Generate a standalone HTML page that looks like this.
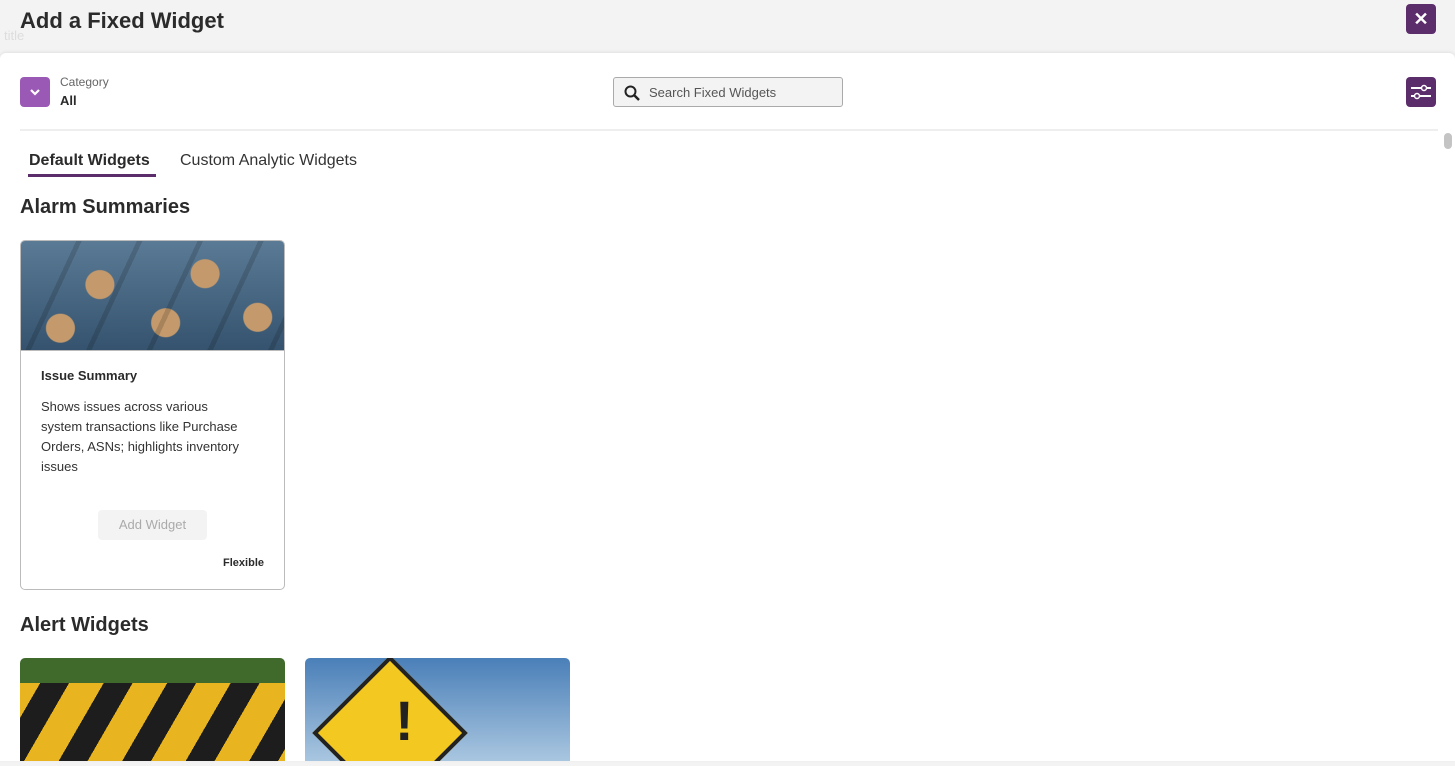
<!DOCTYPE html>
<html><head><style>
*{box-sizing:border-box;margin:0;padding:0}
body{width:1455px;height:766px;overflow:hidden;background:#f3f3f3;font-family:"Liberation Sans",sans-serif;color:#2b2b2b;position:relative}
.title{position:absolute;left:20px;top:8px;font-size:22px;font-weight:bold;color:#2b2b2b}
.ghost{position:absolute;left:4px;top:28px;font-size:13px;color:#ddd}
.close{position:absolute;left:1406px;top:4px;width:30px;height:30px;background:#5c2d6b;border-radius:4px;color:#fff;font-size:18px;font-weight:bold;text-align:center;line-height:30px}
.panel{position:absolute;left:0;top:53px;width:1455px;height:708px;background:#fff;border-radius:6px 6px 0 0;box-shadow:0 -1px 3px rgba(0,0,0,.08);overflow:hidden}
.cat{position:absolute;left:20px;top:24px;width:30px;height:30px;background:#9b59b6;border-radius:4px}
.cat svg{position:absolute;left:9px;top:10px}
.catl{position:absolute;left:60px;top:22px;font-size:12px;color:#666}
.catv{position:absolute;left:60px;top:40px;font-size:13px;font-weight:bold}
.search{position:absolute;left:613px;top:24px;width:230px;height:30px;border:1px solid #aaa;border-radius:3px;background:#f3f3f3;font-size:13px;color:#555;padding:7px 0 0 35px}
.search svg{position:absolute;left:10px;top:7px}
.filt{position:absolute;left:1406px;top:24px;width:30px;height:30px;background:#5c2d6b;border-radius:4px}
.hr{position:absolute;left:20px;top:76px;width:1418px;height:2px;background:#eee}
.scroll{position:absolute;left:1444px;top:80px;width:8px;height:16px;background:#c4c4c4;border-radius:4px}
.tab1{position:absolute;left:29px;top:99px;font-size:16px;font-weight:bold}
.tabu{position:absolute;left:28px;top:121px;width:128px;height:3px;background:#5c2d6b}
.tab2{position:absolute;left:180px;top:99px;font-size:16px;color:#333}
h2{position:absolute;left:20px;font-size:20px;font-weight:bold}
.card{position:absolute;left:20px;top:187px;width:265px;height:350px;border:1px solid #bbb;border-radius:5px;overflow:hidden}
.img1{height:110px;background:repeating-linear-gradient(115deg,transparent 0 50px,rgba(0,0,0,.15) 50px 55px),radial-gradient(circle at 30% 40%,#c49a6c 0 14px,transparent 15px),radial-gradient(circle at 70% 30%,#c49a6c 0 14px,transparent 15px),radial-gradient(circle at 55% 75%,#c49a6c 0 14px,transparent 15px),radial-gradient(circle at 15% 80%,#c49a6c 0 14px,transparent 15px),radial-gradient(circle at 90% 70%,#c49a6c 0 14px,transparent 15px),linear-gradient(180deg,#5a7a95,#35536e);border-bottom:1px solid #bbb}
.ct{position:absolute;left:20px;top:127px;font-size:13px;font-weight:bold}
.cd{position:absolute;left:20px;top:156px;width:230px;font-size:13px;line-height:20px;color:#333;white-space:nowrap}
.btn{position:absolute;left:77px;top:269px;width:109px;height:30px;background:#f3f3f3;border-radius:4px;color:#aaa;font-size:13px;text-align:center;line-height:30px}
.flex{position:absolute;right:20px;top:316px;font-size:11px;font-weight:bold}
.im2{position:absolute;left:20px;top:605px;width:265px;height:103px;border-radius:5px 5px 0 0;background:linear-gradient(180deg,#3f6a2c 0 25px,transparent 25px),repeating-linear-gradient(120deg,#e8b420 0 30px,#1d1d1d 30px 55px)}
.im3{position:absolute;left:305px;top:605px;width:265px;height:103px;border-radius:5px 5px 0 0;background:linear-gradient(180deg,#4a7fb8,#a9c6e0);overflow:hidden}
.sign{position:absolute;left:30px;top:20px;width:110px;height:110px;background:#f3c820;border:4px solid #222;transform:rotate(45deg)}
.ex{position:absolute;left:90px;top:30px;font-size:56px;font-weight:bold;color:#222}
</style></head><body>
<div class="title">Add a Fixed Widget</div>
<div class="ghost">title</div>
<div class="close">✕</div>
<div class="panel">
<div class="cat"><svg width="12" height="10" viewBox="0 0 12 10"><path d="M2 3l4 4 4-4" stroke="#fff" stroke-width="2.2" fill="none"/></svg></div>
<div class="catl">Category</div><div class="catv">All</div>
<div class="search"><svg width="16" height="16" viewBox="0 0 16 16"><circle cx="6.5" cy="6.5" r="5" stroke="#222" stroke-width="2" fill="none"/><path d="M10 10l5 5" stroke="#222" stroke-width="2.4"/></svg>Search Fixed Widgets</div>
<div class="filt"><svg width="30" height="30" viewBox="0 0 30 30"><path d="M5 11h20M5 19h20" stroke="#fff" stroke-width="2"/><circle cx="18" cy="11" r="2.5" fill="#5c2d6b" stroke="#fff" stroke-width="1.5"/><circle cx="11" cy="19" r="2.5" fill="#5c2d6b" stroke="#fff" stroke-width="1.5"/></svg></div>
<div class="hr"></div><div class="scroll"></div>
<div class="tab1">Default Widgets</div><div class="tabu"></div>
<div class="tab2">Custom Analytic Widgets</div>
<h2 style="top:143px">Alarm Summaries</h2>
<div class="card"><div class="img1"></div>
<div class="ct">Issue Summary</div>
<div class="cd">Shows issues across various<br>system transactions like Purchase<br>Orders, ASNs; highlights inventory<br>issues</div>
<div class="btn">Add Widget</div><div class="flex">Flexible</div></div>
<h2 style="top:561px">Alert Widgets</h2>
<div class="im2"></div>
<div class="im3"><div class="sign"></div><div class="ex">!</div></div>
</div>
</body></html>
